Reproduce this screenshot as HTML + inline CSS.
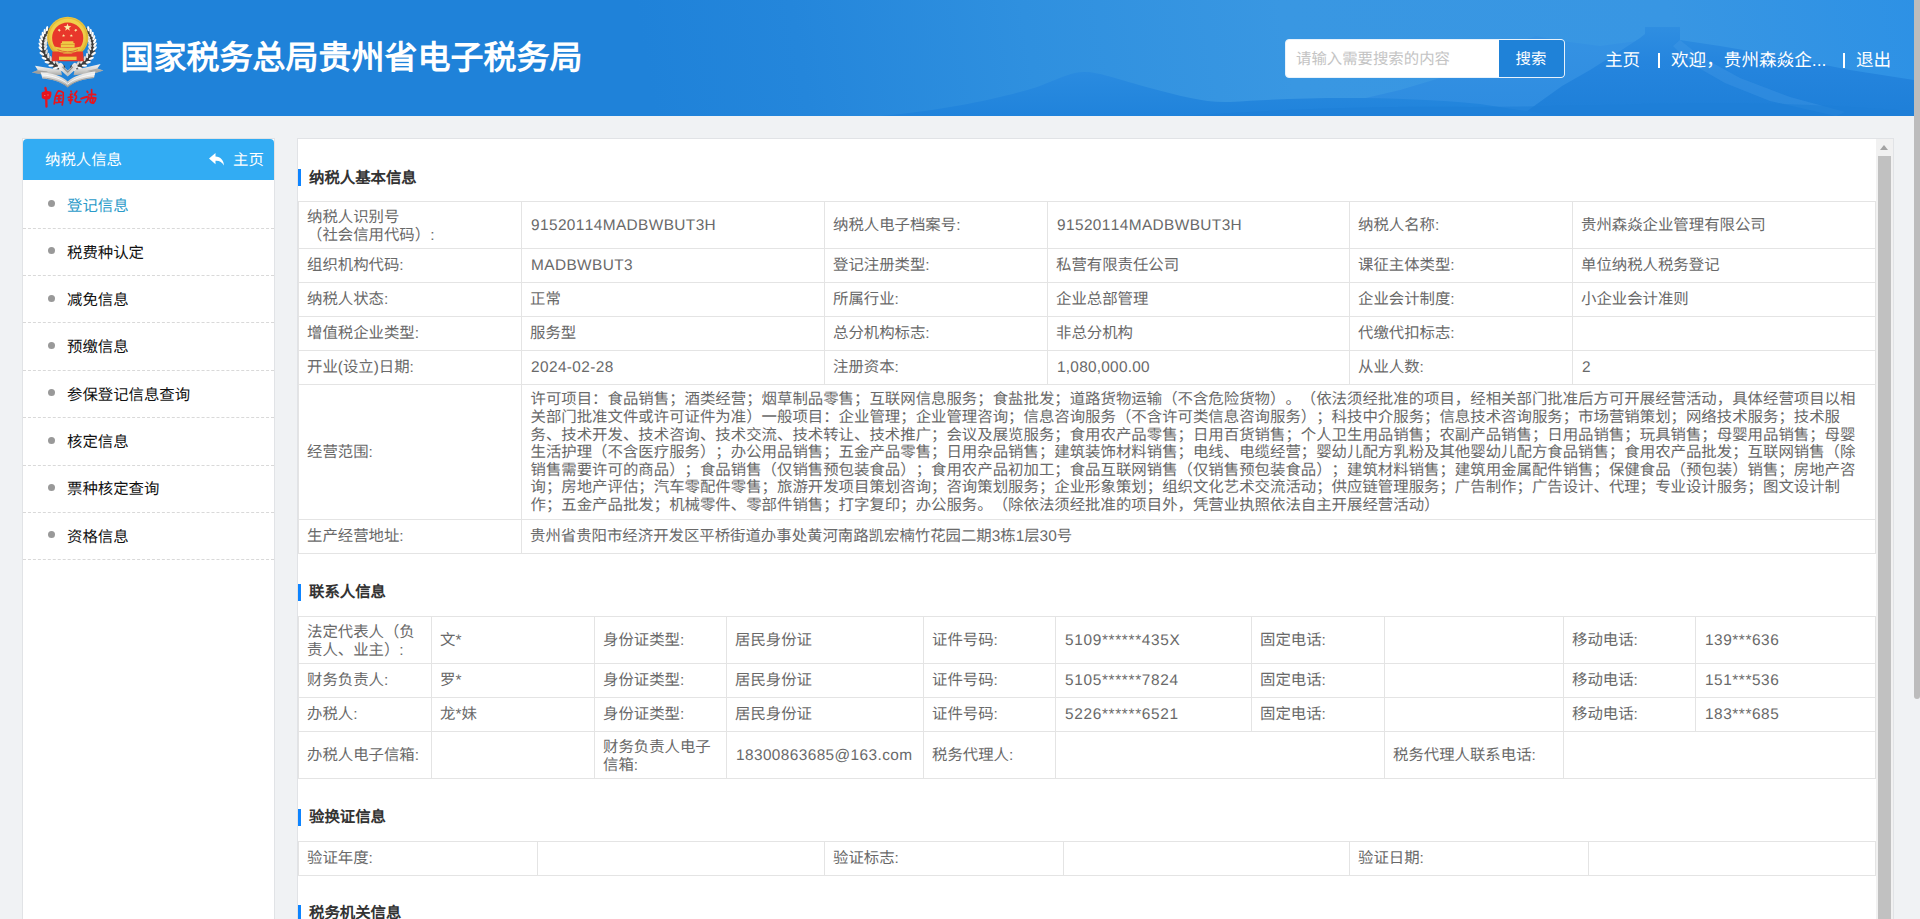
<!DOCTYPE html>
<html lang="zh-CN">
<head>
<meta charset="utf-8">
<title>国家税务总局贵州省电子税务局</title>
<style>
*{box-sizing:border-box;margin:0;padding:0}
html,body{width:1920px;height:919px;overflow:hidden;background:#f0f2f4;font-family:"Liberation Sans",sans-serif;color:#555}
body{position:relative}
/* ---------- header ---------- */
#hd{position:absolute;left:0;top:0;width:1914px;height:116px;background:#1f82d8;overflow:hidden}
#hd .bg{position:absolute;left:0;top:0;width:1914px;height:116px}
#logo{position:absolute;left:24px;top:10px;width:88px;height:102px}
#title{position:absolute;left:120.5px;top:35.5px;font-size:33px;line-height:44px;font-weight:bold;color:#fff;white-space:nowrap;letter-spacing:0}
#search{position:absolute;left:1285px;top:39px;width:280px;height:39px;border-radius:4px;background:#fff;border:1px solid #e8f2fb;overflow:hidden}
#search .ph{position:absolute;left:10px;top:0;line-height:40px;font-size:15.4px;color:#c4c4c4;white-space:nowrap}
#search .btn{position:absolute;left:213px;padding-right:1px;top:0;width:65px;height:37px;background:#1f82d8;color:#fff;font-size:15.4px;line-height:40px;text-align:center}
.nav{position:absolute;top:47px;font-weight:300;font-size:17.6px;line-height:26px;color:#fff;white-space:nowrap}
.sep{position:absolute;top:53px;width:1.5px;height:15px;background:#fff}
/* ---------- page scrollbar ---------- */
#psb{position:absolute;left:1914px;top:0;width:6px;height:699px;background:#bcbcbc;border-radius:0 0 3px 3px}
/* ---------- sidebar ---------- */
#side{position:absolute;left:22px;top:138px;width:253px;height:790px;background:#fff;border:1px solid #e1e3e6}
#side .sh{position:absolute;left:0;top:0;width:251px;height:41px;background:#32acf3;color:#fff;font-size:15.4px;line-height:44px;border-radius:4px 4px 0 0}
#side .sh .t{position:absolute;left:22px;top:0}
#side .sh .h{position:absolute;left:210px;top:0}
#side .sh svg{position:absolute;left:186px;top:14px}
.mi{position:absolute;left:0;width:251px;height:47px;font-size:15.4px;color:#111}
.mi i{position:absolute;left:25px;top:19px;width:7px;height:7px;border-radius:50%;background:#999}
.mi span{position:absolute;left:44px;top:14.5px;line-height:22px;white-space:nowrap}
.mi.on span{color:#2b9bc9}
.dl{position:absolute;left:0;width:251px;height:0;border-top:1px dashed #d9d9d9}
/* ---------- main ---------- */
#main{position:absolute;left:297px;top:138px;width:1597px;height:790px;background:#fff;border:1px solid #e1e3e6;overflow:hidden}
.st{position:absolute;left:0;height:17px;border-left:3px solid #0d84ff;padding-left:8px;font-size:15.4px;line-height:19px;font-weight:bold;color:#333;white-space:nowrap}
table{position:absolute;left:0;border-collapse:collapse;table-layout:fixed;font-size:15.4px;color:#696969}
td{border:1px solid #e4e4e4;padding:1px 9px 0 8px;line-height:17.6px;vertical-align:middle;overflow:hidden;white-space:nowrap}
td.w{white-space:normal;padding-top:3px}
td.sc{white-space:nowrap;padding-top:2px;padding-left:8.5px;font-size:15.415px}
body{text-spacing-trim:space-all;font-kerning:none;text-rendering:geometricPrecision}
td.n{letter-spacing:.4px;padding-left:9px}
/* inner scrollbar */
#isb{position:absolute;left:1578px;top:0;width:17px;height:790px;background:#f1f1f1}
#isb .th{position:absolute;left:2px;top:17px;width:13px;height:780px;background:#c1c1c1}
#isb .up{position:absolute;left:4px;top:6px;width:0;height:0;border-left:4.5px solid transparent;border-right:4.5px solid transparent;border-bottom:5px solid #a3a3a3}
</style>
</head>
<body>
<div id="hd">
<svg class="bg" viewBox="0 0 1914 116" preserveAspectRatio="none">
<defs>
<linearGradient id="hg" gradientUnits="userSpaceOnUse" x1="660" y1="150" x2="1914" y2="-60"><stop offset="0" stop-color="#1f82d9"/><stop offset=".12" stop-color="#2486db"/><stop offset=".3" stop-color="#2f90df"/><stop offset=".5" stop-color="#3997e2"/><stop offset=".8" stop-color="#3896e3"/><stop offset="1" stop-color="#2d91e5"/></linearGradient>
<linearGradient id="m1" x1="0" y1="0" x2="0" y2="1"><stop offset="0" stop-color="#2f8ee1"/><stop offset=".4" stop-color="#2585de"/><stop offset="1" stop-color="#1e7fd8"/></linearGradient>
<linearGradient id="m2" x1="0" y1="0" x2="0" y2="1"><stop offset="0" stop-color="#2a8be0"/><stop offset="1" stop-color="#2083db"/></linearGradient>
<linearGradient id="m3" x1="0" y1="0" x2="0" y2="1"><stop offset="0" stop-color="#3592e3"/><stop offset="1" stop-color="#2e8ce0"/></linearGradient>
</defs>
<rect width="1914" height="116" fill="url(#hg)"/>
<path d="M1290 116 L1340 104 L1400 90 L1440 78 L1480 60 L1512 44 L1536 36 L1562 41 L1600 46 L1645 40 V116 Z" fill="url(#m3)"/>
<path d="M1520 116 L1562 86 L1590 70 L1617 53 L1640 38 L1645 34 L1645 27 L1680 27 L1680 40 L1720 46 L1790 58 L1850 70 L1914 80 V116 Z" fill="url(#m1)"/>
<path d="M1680 40 L1700 56 L1740 78 L1790 97 L1845 112 L1836 116 L1770 101 L1725 83 L1690 63 L1673 46 Z" fill="#4ea2e8" opacity=".28"/>
<path d="M880 116 C950 110 1010 96 1040 86 C1060 78 1072 72 1084 72 C1100 72 1120 80 1150 88 C1180 96 1205 103 1230 102 C1300 97 1400 96 1480 104 L1560 116 Z" fill="url(#m2)"/>
<path d="M1180 116 C1280 109 1380 106 1470 107 C1560 107 1640 103 1720 103 C1800 103 1860 108 1914 111 V116 Z" fill="#1e7ed7" opacity=".6"/>
</svg>
<svg id="logo" viewBox="24 10 88 102" width="88" height="102">
<defs>
<linearGradient id="sv" x1="0" y1="0" x2="0" y2="1"><stop offset="0" stop-color="#f4f4f4"/><stop offset=".55" stop-color="#d2d2d0"/><stop offset="1" stop-color="#a9a8a4"/></linearGradient>
<linearGradient id="sv2" x1="0" y1="0" x2="1" y2="0"><stop offset="0" stop-color="#fafafa"/><stop offset=".5" stop-color="#c4c4c2"/><stop offset="1" stop-color="#ededed"/></linearGradient>
<radialGradient id="gd" cx=".5" cy=".45" r=".55"><stop offset=".7" stop-color="#f1d04c"/><stop offset="1" stop-color="#dcb02a"/></radialGradient>
</defs>
<!-- wreath -->
<g fill="none"><path d="M62 67.5 C52 65.5 45 58.5 43.2 49 C42.2 42 44 36 48.4 31" stroke="#3b3b3b" stroke-width="6.2" stroke-linecap="round"/><path d="M73.4 67.5 C83.4 65.5 90.4 58.5 92.2 49 C93.2 42 91.4 36 87 31" stroke="#3b3b3b" stroke-width="6.2" stroke-linecap="round"/></g>
<g><ellipse cx="60.69" cy="69.85" rx="2.7" ry="1.2" transform="rotate(-202.7 60.69 69.85)" fill="#ffffff"/><ellipse cx="61.69" cy="64.83" rx="2.7" ry="1.2" transform="rotate(-134.7 61.69 64.83)" fill="#e9e9e9"/><ellipse cx="55.54" cy="68.16" rx="2.7" ry="1.2" transform="rotate(-192.1 55.54 68.16)" fill="#f8f8f8"/><ellipse cx="57.45" cy="63.41" rx="2.7" ry="1.2" transform="rotate(-124.1 57.45 63.41)" fill="#d6d6d4"/><ellipse cx="50.99" cy="65.62" rx="2.7" ry="1.2" transform="rotate(-180.9 50.99 65.62)" fill="#ffffff"/><ellipse cx="53.78" cy="61.33" rx="2.7" ry="1.2" transform="rotate(-112.9 53.78 61.33)" fill="#e9e9e9"/><ellipse cx="47.14" cy="62.30" rx="2.7" ry="1.2" transform="rotate(-169.3 47.14 62.30)" fill="#f8f8f8"/><ellipse cx="50.73" cy="58.66" rx="2.7" ry="1.2" transform="rotate(-101.3 50.73 58.66)" fill="#d6d6d4"/><ellipse cx="44.06" cy="58.30" rx="2.7" ry="1.2" transform="rotate(-157.6 44.06 58.30)" fill="#ffffff"/><ellipse cx="48.32" cy="55.47" rx="2.7" ry="1.2" transform="rotate(-89.6 48.32 55.47)" fill="#e9e9e9"/><ellipse cx="41.84" cy="53.72" rx="2.7" ry="1.2" transform="rotate(-146.0 41.84 53.72)" fill="#f8f8f8"/><ellipse cx="46.59" cy="51.80" rx="2.7" ry="1.2" transform="rotate(-78.0 46.59 51.80)" fill="#d6d6d4"/><ellipse cx="40.55" cy="48.54" rx="2.7" ry="1.2" transform="rotate(-132.1 40.55 48.54)" fill="#ffffff"/><ellipse cx="45.62" cy="47.82" rx="2.7" ry="1.2" transform="rotate(-64.1 45.62 47.82)" fill="#e9e9e9"/><ellipse cx="40.36" cy="44.78" rx="2.7" ry="1.2" transform="rotate(-124.6 40.36 44.78)" fill="#f8f8f8"/><ellipse cx="45.48" cy="44.73" rx="2.7" ry="1.2" transform="rotate(-56.6 45.48 44.73)" fill="#d6d6d4"/><ellipse cx="40.70" cy="41.17" rx="2.7" ry="1.2" transform="rotate(-116.4 40.70 41.17)" fill="#ffffff"/><ellipse cx="45.77" cy="41.85" rx="2.7" ry="1.2" transform="rotate(-48.4 45.77 41.85)" fill="#e9e9e9"/><ellipse cx="41.55" cy="37.74" rx="2.7" ry="1.2" transform="rotate(-107.7 41.55 37.74)" fill="#f8f8f8"/><ellipse cx="46.46" cy="39.17" rx="2.7" ry="1.2" transform="rotate(-39.7 46.46 39.17)" fill="#d6d6d4"/><ellipse cx="42.91" cy="34.50" rx="2.7" ry="1.2" transform="rotate(-99.0 42.91 34.50)" fill="#ffffff"/><ellipse cx="47.54" cy="36.66" rx="2.7" ry="1.2" transform="rotate(-31.0 47.54 36.66)" fill="#e9e9e9"/><ellipse cx="44.74" cy="31.48" rx="2.7" ry="1.2" transform="rotate(-90.5 44.74 31.48)" fill="#f8f8f8"/><ellipse cx="49.01" cy="34.30" rx="2.7" ry="1.2" transform="rotate(-22.5 49.01 34.30)" fill="#d6d6d4"/><ellipse cx="47.03" cy="28.69" rx="2.7" ry="1.2" transform="rotate(-82.7 47.03 28.69)" fill="#ffffff"/><ellipse cx="50.87" cy="32.07" rx="2.7" ry="1.2" transform="rotate(-14.7 50.87 32.07)" fill="#e9e9e9"/><ellipse cx="74.71" cy="69.85" rx="2.7" ry="1.2" transform="rotate(382.7 74.71 69.85)" fill="#ffffff"/><ellipse cx="73.71" cy="64.83" rx="2.7" ry="1.2" transform="rotate(314.7 73.71 64.83)" fill="#e9e9e9"/><ellipse cx="79.86" cy="68.16" rx="2.7" ry="1.2" transform="rotate(372.1 79.86 68.16)" fill="#f8f8f8"/><ellipse cx="77.95" cy="63.41" rx="2.7" ry="1.2" transform="rotate(304.1 77.95 63.41)" fill="#d6d6d4"/><ellipse cx="84.41" cy="65.62" rx="2.7" ry="1.2" transform="rotate(360.9 84.41 65.62)" fill="#ffffff"/><ellipse cx="81.62" cy="61.33" rx="2.7" ry="1.2" transform="rotate(292.9 81.62 61.33)" fill="#e9e9e9"/><ellipse cx="88.26" cy="62.30" rx="2.7" ry="1.2" transform="rotate(349.3 88.26 62.30)" fill="#f8f8f8"/><ellipse cx="84.67" cy="58.66" rx="2.7" ry="1.2" transform="rotate(281.3 84.67 58.66)" fill="#d6d6d4"/><ellipse cx="91.34" cy="58.30" rx="2.7" ry="1.2" transform="rotate(337.6 91.34 58.30)" fill="#ffffff"/><ellipse cx="87.08" cy="55.47" rx="2.7" ry="1.2" transform="rotate(269.6 87.08 55.47)" fill="#e9e9e9"/><ellipse cx="93.56" cy="53.72" rx="2.7" ry="1.2" transform="rotate(326.0 93.56 53.72)" fill="#f8f8f8"/><ellipse cx="88.81" cy="51.80" rx="2.7" ry="1.2" transform="rotate(258.0 88.81 51.80)" fill="#d6d6d4"/><ellipse cx="94.85" cy="48.54" rx="2.7" ry="1.2" transform="rotate(312.1 94.85 48.54)" fill="#ffffff"/><ellipse cx="89.78" cy="47.82" rx="2.7" ry="1.2" transform="rotate(244.1 89.78 47.82)" fill="#e9e9e9"/><ellipse cx="95.04" cy="44.78" rx="2.7" ry="1.2" transform="rotate(304.6 95.04 44.78)" fill="#f8f8f8"/><ellipse cx="89.92" cy="44.73" rx="2.7" ry="1.2" transform="rotate(236.6 89.92 44.73)" fill="#d6d6d4"/><ellipse cx="94.70" cy="41.17" rx="2.7" ry="1.2" transform="rotate(296.4 94.70 41.17)" fill="#ffffff"/><ellipse cx="89.63" cy="41.85" rx="2.7" ry="1.2" transform="rotate(228.4 89.63 41.85)" fill="#e9e9e9"/><ellipse cx="93.85" cy="37.74" rx="2.7" ry="1.2" transform="rotate(287.7 93.85 37.74)" fill="#f8f8f8"/><ellipse cx="88.94" cy="39.17" rx="2.7" ry="1.2" transform="rotate(219.7 88.94 39.17)" fill="#d6d6d4"/><ellipse cx="92.49" cy="34.50" rx="2.7" ry="1.2" transform="rotate(279.0 92.49 34.50)" fill="#ffffff"/><ellipse cx="87.86" cy="36.66" rx="2.7" ry="1.2" transform="rotate(211.0 87.86 36.66)" fill="#e9e9e9"/><ellipse cx="90.66" cy="31.48" rx="2.7" ry="1.2" transform="rotate(270.5 90.66 31.48)" fill="#f8f8f8"/><ellipse cx="86.39" cy="34.30" rx="2.7" ry="1.2" transform="rotate(202.5 86.39 34.30)" fill="#d6d6d4"/><ellipse cx="88.37" cy="28.69" rx="2.7" ry="1.2" transform="rotate(262.7 88.37 28.69)" fill="#ffffff"/><ellipse cx="84.53" cy="32.07" rx="2.7" ry="1.2" transform="rotate(194.7 84.53 32.07)" fill="#e9e9e9"/></g>
<!-- emblem -->
<circle cx="67.7" cy="37.4" r="20.6" fill="url(#gd)"/>
<circle cx="67.7" cy="37.4" r="19.2" fill="none" stroke="#c99a1e" stroke-width=".5" opacity=".6"/>
<circle cx="67.7" cy="38" r="15.6" fill="#e8372b"/>
<path d="M52.4 51.5 H83 L83.8 61.2 H51.6 Z" fill="#e53a2c"/>
<path d="M54.3 46.4 A15.6 15.6 0 0 0 81.1 46.4 Q67.7 49.4 54.3 46.4 Z" fill="#eccb48"/>
<path d="M57.4 49.6 Q67.7 54 78 49.6" fill="none" stroke="#d8452a" stroke-width=".7"/>
<path d="M60.5 52.2 Q67.7 54.6 74.9 52.2" fill="none" stroke="#d8452a" stroke-width=".6"/>
<rect x="59" y="56.6" width="17.6" height="3.4" fill="#efc640"/>
<path d="M62 41.3 H73.4 V43 H74.6 V47.6 H60.8 V43 H62 Z" fill="#efcb45"/>
<path d="M61 44.4 H74.4" stroke="#c9761e" stroke-width=".5"/>
<polygon points="67.50,23.40 68.44,26.11 71.30,26.16 69.02,27.89 69.85,30.64 67.50,29.00 65.15,30.64 65.98,27.89 63.70,26.16 66.56,26.11" fill="#fbeea8"/><polygon points="60.20,28.74 59.96,30.01 61.06,30.67 59.78,30.84 59.49,32.09 58.94,30.92 57.66,31.03 58.60,30.15 58.10,28.96 59.22,29.58" fill="#fbeea8"/><polygon points="74.80,28.74 75.78,29.58 76.90,28.96 76.40,30.15 77.34,31.03 76.06,30.92 75.51,32.09 75.22,30.84 73.94,30.67 75.04,30.01" fill="#fbeea8"/><polygon points="63.90,34.03 64.09,35.23 65.28,35.46 64.20,36.02 64.35,37.23 63.48,36.37 62.38,36.88 62.93,35.79 62.10,34.90 63.30,35.09" fill="#fbeea8"/><polygon points="71.00,34.03 71.60,35.09 72.80,34.90 71.97,35.79 72.52,36.88 71.42,36.37 70.55,37.23 70.70,36.02 69.62,35.46 70.81,35.23" fill="#fbeea8"/>
<!-- ribbon -->
<path d="M59.4 63 L67.7 70.4 L76 63 L78 67 L67.7 76.6 L57.4 67 Z" fill="url(#sv2)"/>
<path d="M62.5 66.8 L67.7 72.2 L72.9 66.8" fill="none" stroke="#8e8e8c" stroke-width="1.1"/>
<path d="M35 65.8 L61 70 L62 75.2 L41 74.2 L31.8 72.6 L37.8 70.2 Z" fill="url(#sv)"/>
<path d="M37.8 70.2 L48 71.4 L41 74.2 L31.8 72.6 Z" fill="#8f8f8d" opacity=".7"/>
<path d="M100.6 64 L74.6 70 L73.6 75.2 L95 73.2 L103.4 70.6 L97.4 68.6 Z" fill="url(#sv)"/>
<path d="M97.4 68.6 L87 71 L95 73.2 L103.4 70.6 Z" fill="#8f8f8d" opacity=".6"/>
<g transform="translate(0 -1.3)"><path d="M40.6 73.6 C52 74.2 62 77.4 67.7 82.8 C73.4 77.4 84 74.2 95.4 72.8 L94 79.4 C83 80.4 74 83.4 67.7 88.8 C61.4 83.4 53 80.6 42.4 79.8 Z" fill="url(#sv)"/>
<path d="M42 76.2 C52 76.8 62 80 67.7 85.4 C73.4 80 84 76.8 94.6 75.8" fill="none" stroke="#fff" stroke-width="1" opacity=".8"/>
<path d="M42.6 79.2 C53 80 61.4 82.8 67.7 88.2 C74 82.8 83 79.8 93.8 78.8" fill="none" stroke="#8a8986" stroke-width=".9" opacity=".8"/></g>
<!-- brush text -->
<g fill="none" stroke="#e8141d" stroke-linecap="round" stroke-linejoin="round">
<path d="M45.4 88 Q46.4 91 46 93 L46.5 106.6" stroke-width="2.3"/>
<path d="M42.6 93.2 Q46 91.4 50.4 92.4 Q50.8 96.6 48.8 98.2 Q45 99 42.8 97.4 Z" stroke-width="2" fill="#e8141d"/>
<path d="M44.6 95.6 L45 95.6 M47.8 95 L48.2 95" stroke="#f08a8c" stroke-width=".9"/>
<path d="M55.4 96.6 Q54.6 101 54.2 103.8 M55.4 96.6 Q57 92 58.6 90.8 Q61.8 91.2 63.2 92.6 Q63.8 99 62.2 105 M56.4 96.2 L61.2 95.4 M57 99 L60.8 98.6 M58.9 95.6 L58.9 101.6 M56 102.6 L61.6 102" stroke-width="1.7"/>
<path d="M71 91.2 L71.3 91.7" stroke-width="1.8"/>
<path d="M70.4 94.4 L72.2 94 M68.2 97.4 Q70.4 96.4 72.6 97.2 M70.7 94.8 Q71 100 70.4 103.4 M68.8 100 L69.6 100.6 M72.2 99.6 L71.6 100.4" stroke-width="1.7"/>
<path d="M76.8 91.2 Q75.2 93.4 74.4 94.8 Q77.2 96 76.2 98 Q74.8 99.8 75.2 101 Q77.4 102.8 80.6 101.6" stroke-width="1.7"/>
<path d="M81.2 98.6 Q84.6 97.2 87.6 96.8" stroke-width="2"/>
<path d="M87.2 91.4 L87.7 92.4" stroke-width="1.9"/>
<path d="M91.6 89.6 Q92 94 91.2 97.8 M88.8 94.8 Q92 93.4 95.6 94.6 M88.8 97.2 Q87.6 100.8 85.6 102.6 M90.2 98.4 Q93 97.2 95.8 98 Q95.4 101.6 93.4 103.2 Q91 103.4 90.2 101.6 Z M92.9 98 L92.5 102.8" stroke-width="1.75"/>
</g>
</svg>
<div id="title">国家税务总局贵州省电子税务局</div>
<div id="search"><span class="ph">请输入需要搜索的内容</span><span class="btn">搜索</span></div>
<span class="nav" style="left:1605px">主页</span><i class="sep" style="left:1658px"></i>
<span class="nav" style="left:1671px">欢迎，贵州森焱企...</span><i class="sep" style="left:1843px"></i>
<span class="nav" style="left:1856px">退出</span>
</div>
<div id="psb"></div>

<div id="side">
<div class="sh"><span class="t">纳税人信息</span><svg width="16" height="14" viewBox="0 0 16 14"><path d="M6.5 0 L0 5.6 L6.5 11.2 V7.8 C10.5 7.6 13.2 9 15 12.6 C14.8 7.2 11.6 3.8 6.5 3.5 Z" fill="#fff"/></svg><span class="h">主页</span></div>
<div class="mi on" style="top:42.00px"><i></i><span>登记信息</span></div>
<div class="mi" style="top:89.31px"><i></i><span>税费种认定</span></div>
<div class="mi" style="top:136.62px"><i></i><span>减免信息</span></div>
<div class="mi" style="top:183.93px"><i></i><span>预缴信息</span></div>
<div class="mi" style="top:231.24px"><i></i><span>参保登记信息查询</span></div>
<div class="mi" style="top:278.55px"><i></i><span>核定信息</span></div>
<div class="mi" style="top:325.86px"><i></i><span>票种核定查询</span></div>
<div class="mi" style="top:373.17px"><i></i><span>资格信息</span></div>
<i class="dl" style="top:89px"></i><i class="dl" style="top:136px"></i><i class="dl" style="top:183px"></i><i class="dl" style="top:231px"></i><i class="dl" style="top:278px"></i><i class="dl" style="top:326px"></i><i class="dl" style="top:373px"></i><i class="dl" style="top:420px"></i>
</div>

<div id="main">
<!-- section 1 -->
<div class="st" style="top:30px">纳税人基本信息</div>
<table style="top:62px;width:1577px">
<colgroup><col style="width:223px"><col style="width:303px"><col style="width:223px"><col style="width:302px"><col style="width:223px"><col style="width:303px"></colgroup>
<tr style="height:47px"><td class="w">纳税人识别号<br>（社会信用代码）:</td><td class="n">91520114MADBWBUT3H</td><td>纳税人电子档案号:</td><td class="n">91520114MADBWBUT3H</td><td>纳税人名称:</td><td>贵州森焱企业管理有限公司</td></tr>
<tr style="height:34px"><td>组织机构代码:</td><td class="n">MADBWBUT3</td><td>登记注册类型:</td><td>私营有限责任公司</td><td>课征主体类型:</td><td>单位纳税人税务登记</td></tr>
<tr style="height:34px"><td>纳税人状态:</td><td>正常</td><td>所属行业:</td><td>企业总部管理</td><td>企业会计制度:</td><td>小企业会计准则</td></tr>
<tr style="height:34px"><td>增值税企业类型:</td><td>服务型</td><td>总分机构标志:</td><td>非总分机构</td><td>代缴代扣标志:</td><td></td></tr>
<tr style="height:34px"><td>开业(设立)日期:</td><td class="n">2024-02-28</td><td>注册资本:</td><td class="n" style="letter-spacing:.25px">1,080,000.00</td><td>从业人数:</td><td class="n">2</td></tr>
<tr style="height:135px"><td>经营范围:</td><td colspan="5" class="sc">许可项目：食品销售；酒类经营；烟草制品零售；互联网信息服务；食盐批发；道路货物运输（不含危险货物）。（依法须经批准的项目，经相关部门批准后方可开展经营活动，具体经营项目以相<br>关部门批准文件或许可证件为准）一般项目：企业管理；企业管理咨询；信息咨询服务（不含许可类信息咨询服务）；科技中介服务；信息技术咨询服务；市场营销策划；网络技术服务；技术服<br>务、技术开发、技术咨询、技术交流、技术转让、技术推广；会议及展览服务；食用农产品零售；日用百货销售；个人卫生用品销售；农副产品销售；日用品销售；玩具销售；母婴用品销售；母婴<br>生活护理（不含医疗服务）；办公用品销售；五金产品零售；日用杂品销售；建筑装饰材料销售；电线、电缆经营；婴幼儿配方乳粉及其他婴幼儿配方食品销售；食用农产品批发；互联网销售（除<br>销售需要许可的商品）；食品销售（仅销售预包装食品）；食用农产品初加工；食品互联网销售（仅销售预包装食品）；建筑材料销售；建筑用金属配件销售；保健食品（预包装）销售；房地产咨<br>询；房地产评估；汽车零配件零售；旅游开发项目策划咨询；咨询策划服务；企业形象策划；组织文化艺术交流活动；供应链管理服务；广告制作；广告设计、代理；专业设计服务；图文设计制<br>作；五金产品批发；机械零件、零部件销售；打字复印；办公服务。（除依法须经批准的项目外，凭营业执照依法自主开展经营活动）</td></tr>
<tr style="height:34px"><td>生产经营地址:</td><td colspan="5">贵州省贵阳市经济开发区平桥街道办事处黄河南路凯宏楠竹花园二期3栋1层30号</td></tr>
</table>
<!-- section 2 -->
<div class="st" style="top:445px;line-height:17px">联系人信息</div>
<table style="top:477px;width:1577px">
<colgroup><col style="width:133px"><col style="width:163px"><col style="width:132px"><col style="width:197px"><col style="width:132px"><col style="width:196px"><col style="width:133px"><col style="width:179px"><col style="width:132px"><col style="width:180px"></colgroup>
<tr style="height:47px"><td class="w">法定代表人（负责人、业主）:</td><td>文*</td><td>身份证类型:</td><td>居民身份证</td><td>证件号码:</td><td class="n" style="letter-spacing:.66px">5109******435X</td><td>固定电话:</td><td></td><td>移动电话:</td><td class="n" style="letter-spacing:.55px">139***636</td></tr>
<tr style="height:34px"><td>财务负责人:</td><td>罗*</td><td>身份证类型:</td><td>居民身份证</td><td>证件号码:</td><td class="n" style="letter-spacing:.66px">5105******7824</td><td>固定电话:</td><td></td><td>移动电话:</td><td class="n" style="letter-spacing:.55px">151***536</td></tr>
<tr style="height:34px"><td>办税人:</td><td>龙*妹</td><td>身份证类型:</td><td>居民身份证</td><td>证件号码:</td><td class="n" style="letter-spacing:.66px">5226******6521</td><td>固定电话:</td><td></td><td>移动电话:</td><td class="n" style="letter-spacing:.55px">183***685</td></tr>
<tr style="height:47px"><td>办税人电子信箱:</td><td></td><td class="w">财务负责人电子信箱:</td><td class="n">18300863685@163.com</td><td>税务代理人:</td><td colspan="2"></td><td style="overflow:visible">税务代理人联系电话:</td><td colspan="2"></td></tr>
</table>
<!-- section 3 -->
<div class="st" style="top:670px;line-height:17px">验换证信息</div>
<table style="top:702px;width:1577px">
<colgroup><col style="width:239px"><col style="width:287px"><col style="width:239px"><col style="width:286px"><col style="width:239px"><col style="width:287px"></colgroup>
<tr style="height:34px"><td>验证年度:</td><td></td><td>验证标志:</td><td></td><td>验证日期:</td><td></td></tr>
</table>
<!-- section 4 -->
<div class="st" style="top:766px;line-height:17px">税务机关信息</div>
<div id="isb"><i class="up"></i><i class="th"></i></div>
</div>
</body>
</html>
